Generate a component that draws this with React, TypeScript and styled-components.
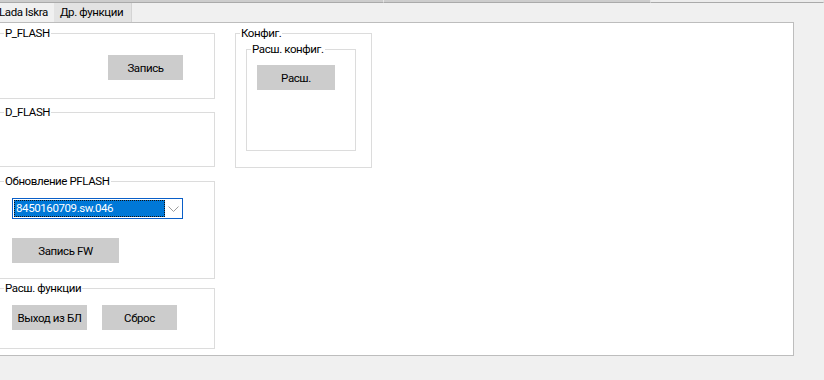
import styled, { createGlobalStyle } from 'styled-components';

const GlobalStyle = createGlobalStyle`
  html, body {
    margin: 0;
    padding: 0;
    background: #f0f0f0;
    overflow: hidden;
  }
  * {
    box-sizing: border-box;
  }
`;

const StyledWindow = styled.div`
  width: 824px;
  height: 380px;
  display: flex;
  flex-direction: column;
  font-family: Roboto, 'Liberation Sans', sans-serif;
  font-size: 11.5px;
  letter-spacing: -0.4px;
  color: #000;
`;

const StyledTopStrip = styled.div`
  display: flex;
  height: 3px;
`;

const StyledStripPart = styled.div<{ $w: number; $light?: boolean }>`
  width: ${(p) => p.$w}px;
  height: 100%;
  background: ${(p) => (p.$light ? '#ececec' : '#cdcdcd')};
  border-bottom: 1px solid #aaaaaa;
  border-right: 1px solid #e4e4e4;
`;

const StyledTabRow = styled.div`
  display: flex;
  height: 19px;
`;

const StyledTab = styled.div<{ $active?: boolean }>`
  display: flex;
  align-items: center;
  height: 100%;
  padding: 0 ${(p) => (p.$active ? '8px' : '6px')} 1px ${(p) => (p.$active ? '6px' : '0')};
  background: ${(p) => (p.$active ? '#e3e3e3' : '#f0f0f0')};
  border-right: ${(p) => (p.$active ? '1px solid #d4d4d4' : 'none')};
  white-space: nowrap;
  margin-left: ${(p) => (p.$active ? '0' : '-1px')};
`;

const StyledPanel = styled.div`
  width: 794px;
  height: 334px;
  background: #fff;
  border: 1px solid #bdbdbd;
  border-left: none;
  display: flex;
  align-items: flex-start;
  gap: 20px;
  padding-top: 3px;
`;

const StyledColumn = styled.div`
  display: flex;
  flex-direction: column;
  margin-left: -1px;
`;

const StyledGroup = styled.fieldset<{ $w: number; $h: number; $mt?: number }>`
  width: ${(p) => p.$w}px;
  height: ${(p) => p.$h}px;
  margin: ${(p) => p.$mt ?? 0}px 0 0 0;
  padding: 0;
  min-width: 0;
  border: 1px solid #dcdcdc;
`;

const StyledLegend = styled.legend`
  margin-left: 4px;
  padding: 0 1px;
  line-height: 14px;
  white-space: nowrap;
`;

const StyledBody = styled.div<{ $pad: string; $column?: boolean; $gap?: number }>`
  display: flex;
  flex-direction: ${(p) => (p.$column ? 'column' : 'row')};
  align-items: flex-start;
  gap: ${(p) => p.$gap ?? 0}px;
  padding: ${(p) => p.$pad};
`;

const StyledButton = styled.button<{ $w: number }>`
  width: ${(p) => p.$w}px;
  height: 25px;
  background: #cccccc;
  border: none;
  padding: 0;
  font: inherit;
  letter-spacing: inherit;
  color: #000;
`;

const StyledCombo = styled.div`
  width: 171px;
  height: 21px;
  border: 1px solid #0a5fc8;
  background: #fff;
  display: flex;
  align-items: center;
  padding: 1px;
`;

const StyledSelected = styled.div`
  width: 151px;
  height: 17px;
  background: #0078d7;
  color: #fff;
  outline: 1px dotted #111;
  outline-offset: -1px;
  line-height: 17px;
  padding-left: 2px;
  white-space: nowrap;
`;

const StyledArrow = styled.div`
  flex: 1;
  display: flex;
  justify-content: center;
  align-items: center;
`;

export default function App() {
  return (
    <>
      <GlobalStyle />
      <StyledWindow>
        <StyledTopStrip>
          <StyledStripPart $w={384} />
          <StyledStripPart $w={267} />
          <StyledStripPart $w={173} $light />
        </StyledTopStrip>
        <StyledTabRow>
          <StyledTab>Lada Iskra</StyledTab>
          <StyledTab $active>Др. функции</StyledTab>
        </StyledTabRow>
        <StyledPanel>
          <StyledColumn>
            <StyledGroup $w={216} $h={73}>
              <StyledLegend>P_FLASH</StyledLegend>
              <StyledBody $pad="15px 0 0 108px">
                <StyledButton $w={75}>Запись</StyledButton>
              </StyledBody>
            </StyledGroup>
            <StyledGroup $w={216} $h={62} $mt={6}>
              <StyledLegend>D_FLASH</StyledLegend>
            </StyledGroup>
            <StyledGroup $w={216} $h={105} $mt={7}>
              <StyledLegend>Обновление PFLASH</StyledLegend>
              <StyledBody $pad="10px 0 0 12px" $column $gap={19}>
                <StyledCombo>
                  <StyledSelected>8450160709.sw.046</StyledSelected>
                  <StyledArrow>
                    <svg width="11" height="6" viewBox="0 0 11 6">
                      <path d="M0.5 0.5 L5.5 5.5 L10.5 0.5" fill="none" stroke="#9a9a9a" strokeWidth="1" />
                    </svg>
                  </StyledArrow>
                </StyledCombo>
                <StyledButton $w={107}>Запись FW</StyledButton>
              </StyledBody>
            </StyledGroup>
            <StyledGroup $w={216} $h={68} $mt={2}>
              <StyledLegend>Расш. функции</StyledLegend>
              <StyledBody $pad="10px 0 0 12px" $gap={15}>
                <StyledButton $w={75}>Выход из БЛ</StyledButton>
                <StyledButton $w={75}>Сброс</StyledButton>
              </StyledBody>
            </StyledGroup>
          </StyledColumn>
          <StyledGroup $w={137} $h={142}>
            <StyledLegend>Конфиг.</StyledLegend>
            <StyledBody $pad="2px 0 0 10px">
              <StyledGroup $w={110} $h={109}>
                <StyledLegend>Расш. конфиг.</StyledLegend>
                <StyledBody $pad="9px 0 0 10px">
                  <StyledButton $w={78}>Расш.</StyledButton>
                </StyledBody>
              </StyledGroup>
            </StyledBody>
          </StyledGroup>
        </StyledPanel>
      </StyledWindow>
    </>
  );
}
